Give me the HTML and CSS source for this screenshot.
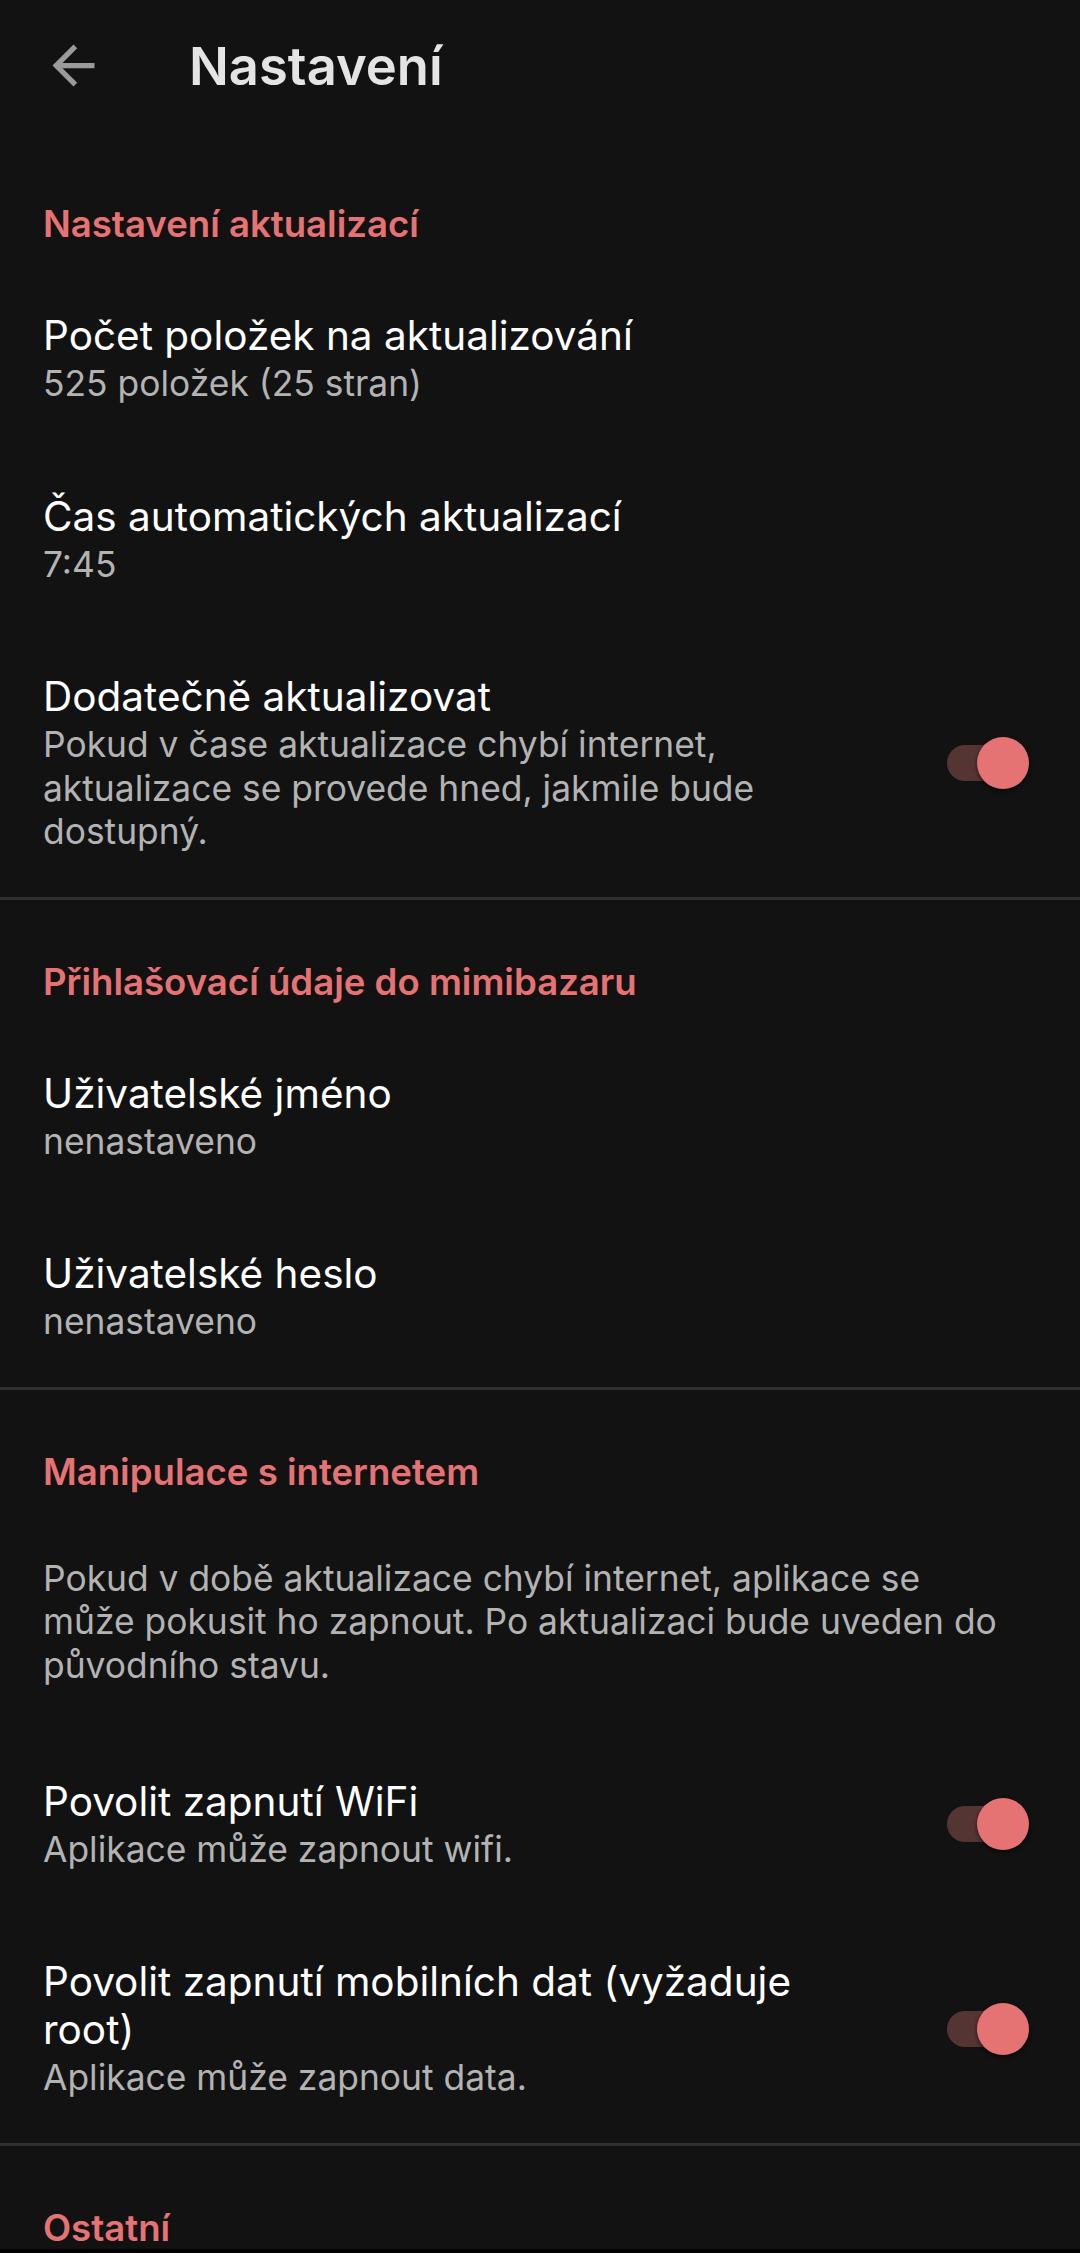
FILE: index.html
```html
<!DOCTYPE html>
<html lang="cs">
<head>
<meta charset="utf-8">
<title>Nastavení</title>
<link rel="stylesheet" href="styles.css">
</head>
<body>
<header class="appbar">
  <svg class="back" viewBox="0 0 24 24" aria-hidden="true"><path d="M20 11H7.83l5.59-5.59L12 4l-8 8 8 8 1.41-1.41L7.83 13H20v-2z"/></svg>
  <h1 class="title">Nastavení</h1>
</header>

<section class="category first">
  <h2 class="cat-title">Nastavení aktualizací</h2>
  <div class="pref">
    <div class="pref-text">
      <div class="pref-title">Počet položek na aktualizování</div>
      <div class="pref-summary">525 položek (25 stran)</div>
    </div>
  </div>
  <div class="pref">
    <div class="pref-text">
      <div class="pref-title">Čas automatických aktualizací</div>
      <div class="pref-summary">7:45</div>
    </div>
  </div>
  <div class="pref">
    <div class="pref-text with-widget">
      <div class="pref-title">Dodatečně aktualizovat</div>
      <div class="pref-summary">Pokud v čase aktualizace chybí internet, aktualizace se provede hned, jakmile bude dostupný.</div>
    </div>
    <div class="switch"><span class="track"></span><span class="thumb"></span></div>
  </div>
</section>

<section class="category">
  <h2 class="cat-title">Přihlašovací údaje do mimibazaru</h2>
  <div class="pref">
    <div class="pref-text">
      <div class="pref-title">Uživatelské jméno</div>
      <div class="pref-summary">nenastaveno</div>
    </div>
  </div>
  <div class="pref">
    <div class="pref-text">
      <div class="pref-title">Uživatelské heslo</div>
      <div class="pref-summary">nenastaveno</div>
    </div>
  </div>
</section>

<section class="category">
  <h2 class="cat-title">Manipulace s internetem</h2>
  <div class="pref info">
    <div class="pref-text">
      <div class="pref-summary only">Pokud v době aktualizace chybí internet, aplikace se může pokusit ho zapnout. Po aktualizaci bude uveden do původního stavu.</div>
    </div>
  </div>
  <div class="pref">
    <div class="pref-text with-widget">
      <div class="pref-title">Povolit zapnutí WiFi</div>
      <div class="pref-summary">Aplikace může zapnout wifi.</div>
    </div>
    <div class="switch"><span class="track"></span><span class="thumb"></span></div>
  </div>
  <div class="pref">
    <div class="pref-text with-widget">
      <div class="pref-title">Povolit zapnutí mobilních dat (vyžaduje root)</div>
      <div class="pref-summary">Aplikace může zapnout data.</div>
    </div>
    <div class="switch"><span class="track"></span><span class="thumb"></span></div>
  </div>
</section>

<section class="category">
  <h2 class="cat-title">Ostatní</h2>
</section>

<div class="navstrip"></div>
</body>
</html>
```

FILE: styles.css
```css
html {
  background: #121212;
}

body {
  margin: 0;
  background: #121212;
  font-family: "Inter", "Roboto", "Noto Sans", sans-serif;
  color: #ffffff;
}

.appbar {
  height: 131px;
  display: flex;
  align-items: center;
}

.back {
  width: 63px;
  height: 63px;
  margin-left: 42px;
  fill: #9a9a9a;
  flex: none;
}

.title {
  margin: 0 0 0 84px;
  font-size: 52.5px;
  font-weight: 600;
  color: #e4e4e4;
  line-height: 62px;
}

.category {
  border-top: 3px solid #2f2f2f;
  padding-top: 60px;
}

.category.first {
  border-top: none;
  padding-top: 71px;
}

.cat-title {
  margin: 0;
  padding: 0 43px 22px;
  font-size: 36.6px;
  line-height: 44px;
  font-weight: 600;
  color: #e57373;
}

.pref {
  display: flex;
  align-items: center;
  padding: 44px 0 43px 43px;
}

.pref.info {
  padding-top: 41px;
  padding-bottom: 46.5px;
}

.pref-text {
  flex: 1;
  min-width: 0;
  padding-right: 64px;
}

.pref-text.with-widget {
  padding-right: 97px;
}

.pref-title {
  font-size: 40.5px;
  line-height: 48px;
  color: #ffffff;
}

.pref-summary {
  margin-top: 2px;
  font-size: 35.4px;
  line-height: 43.5px;
  color: #b3b3b3;
}

.pref-summary.only {
  margin-top: 0;
}

.switch {
  position: relative;
  flex: none;
  width: 82px;
  height: 52px;
  margin-right: 51px;
}

.track {
  position: absolute;
  left: 0;
  top: 8px;
  width: 72px;
  height: 36px;
  border-radius: 18px;
  background: #553434;
}

.thumb {
  position: absolute;
  right: 0;
  top: 0;
  width: 52px;
  height: 52px;
  border-radius: 50%;
  background: #e57373;
  box-shadow: 0 2px 4px rgba(0, 0, 0, 0.55);
}

.navstrip {
  position: fixed;
  left: 0;
  right: 0;
  bottom: 0;
  height: 4px;
  background: #000000;
}
```
